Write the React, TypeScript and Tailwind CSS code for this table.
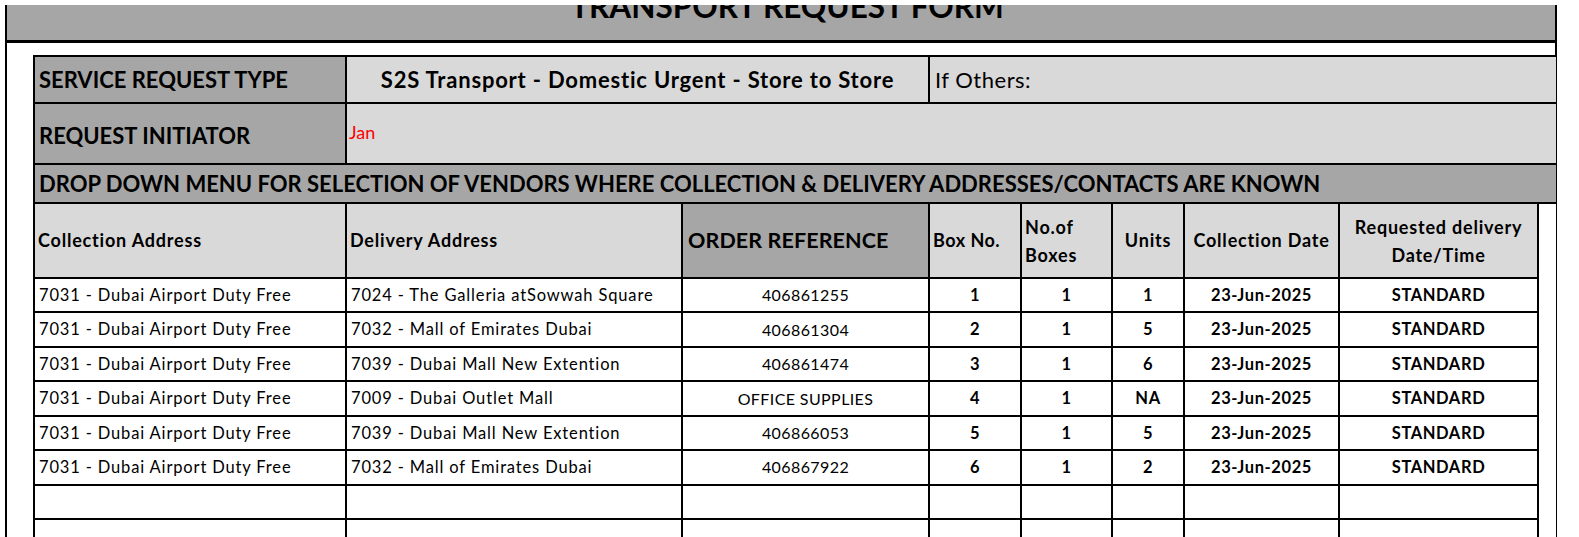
import React from 'react';

type Row = {
    from: string;
    to: string;
    ref: string;
    box: string;
    boxes: string;
    units: string;
    date: string;
    delivery: string;
};

const rows: Row[] = [
    { from: '7031 - Dubai Airport Duty Free', to: '7024 - The Galleria atSowwah Square', ref: '406861255', box: '1', boxes: '1', units: '1', date: '23-Jun-2025', delivery: 'STANDARD' },
    { from: '7031 - Dubai Airport Duty Free', to: '7032 - Mall of Emirates Dubai', ref: '406861304', box: '2', boxes: '1', units: '5', date: '23-Jun-2025', delivery: 'STANDARD' },
    { from: '7031 - Dubai Airport Duty Free', to: '7039 - Dubai Mall New Extention', ref: '406861474', box: '3', boxes: '1', units: '6', date: '23-Jun-2025', delivery: 'STANDARD' },
    { from: '7031 - Dubai Airport Duty Free', to: '7009 - Dubai Outlet Mall', ref: 'OFFICE SUPPLIES', box: '4', boxes: '1', units: 'NA', date: '23-Jun-2025', delivery: 'STANDARD' },
    { from: '7031 - Dubai Airport Duty Free', to: '7039 - Dubai Mall New Extention', ref: '406866053', box: '5', boxes: '1', units: '5', date: '23-Jun-2025', delivery: 'STANDARD' },
    { from: '7031 - Dubai Airport Duty Free', to: '7032 - Mall of Emirates Dubai', ref: '406867922', box: '6', boxes: '1', units: '2', date: '23-Jun-2025', delivery: 'STANDARD' },
];

// Shared cell border, like an Excel grid line
const cell = 'border-2 border-black p-0';

// Trailing blank column: only the left line shows
const spacer = 'border-2 border-y-0 border-r-0 border-black bg-white p-0';

// Data cell text styles
const addr = 'pl-[4px] text-left text-[16.5px] tracking-[0.85px]';
const plain = 'text-center text-[16px] tracking-[0.4px]';
const bold = 'text-center text-[16.5px] tracking-[0.6px] font-bold';

const DataRow: React.FC<{ row?: Row }> = ({ row }) => (
    <tr className="h-[34.45px]">
        <td className={`${cell} ${addr}`}>{row?.from}</td>
        <td className={`${cell} ${addr}`}>{row?.to}</td>
        <td className={`${cell} ${plain}`}>{row?.ref}</td>
        <td className={`${cell} ${bold}`}>{row?.box}</td>
        <td className={`${cell} ${bold}`}>{row?.boxes}</td>
        <td className={`${cell} ${bold}`}>{row?.units}</td>
        <td className={`${cell} ${bold}`}>{row?.date}</td>
        <td className={`${cell} ${bold}`}>{row?.delivery}</td>
        <td className={spacer} />
    </tr>
);

export default function App() {
    return (
        <div className="h-[537px] w-[1579px] overflow-hidden bg-white pt-[5px] pl-[5px] font-['Lato',sans-serif] text-black">
            <div className="h-[600px] w-[1552px] border-x-2 border-black">
                {/* Title band, clipped at the top like the sheet */}
                <div className="h-[38px] overflow-hidden border-b-[3px] border-black bg-[#a6a6a6]">
                    <div className="-mt-[18px] pl-[12px] text-center text-[31.5px] leading-[38px] font-bold">
                        TRANSPORT REQUEST FORM
                    </div>
                </div>

                <div className="pt-[12px] pl-[26px]">
                    <table className="w-[1522px] table-fixed border-collapse">
                        <colgroup>
                            <col className="w-[312px]" />
                            <col className="w-[336px]" />
                            <col className="w-[247px]" />
                            <col className="w-[92px]" />
                            <col className="w-[91px]" />
                            <col className="w-[72px]" />
                            <col className="w-[155px]" />
                            <col className="w-[199px]" />
                            <col className="w-[18px]" />
                        </colgroup>
                        <tbody>
                            <tr className="h-[47px] text-[22px]">
                                <td className={`${cell} bg-[#a6a6a6] pl-[4px] font-bold`}>SERVICE REQUEST TYPE</td>
                                <td colSpan={2} className={`${cell} bg-[#d9d9d9] text-center font-bold tracking-[0.8px]`}>
                                    S2S Transport - Domestic Urgent - Store to Store
                                </td>
                                <td colSpan={6} className={`${cell} border-r-0 bg-[#d9d9d9] pl-[5px] tracking-[0.5px]`}>
                                    If Others:
                                </td>
                            </tr>
                            <tr className="h-[61px]">
                                <td className={`${cell} bg-[#a6a6a6] pl-[4px] pt-[4px] text-[22px] font-bold`}>REQUEST INITIATOR</td>
                                <td colSpan={8} className={`${cell} border-r-0 bg-[#d9d9d9] pl-[2px] pb-[2px] text-[18px] text-[#ff0000]`}>
                                    Jan
                                </td>
                            </tr>
                            <tr className="h-[39px]">
                                <td colSpan={9} className={`${cell} border-r-0 bg-[#a6a6a6] pl-[4px] text-[22px] font-bold`}>
                                    DROP DOWN MENU FOR SELECTION OF VENDORS WHERE COLLECTION &amp; DELIVERY ADDRESSES/CONTACTS ARE KNOWN
                                </td>
                            </tr>
                            <tr className="h-[75px] text-[18px] font-bold tracking-[0.8px]">
                                <td className={`${cell} bg-[#d9d9d9] pl-[3px]`}>Collection Address</td>
                                <td className={`${cell} bg-[#d9d9d9] pl-[3px]`}>Delivery Address</td>
                                <td className={`${cell} bg-[#a6a6a6] pl-[5px] text-[21.5px] tracking-[0.1px]`}>ORDER REFERENCE</td>
                                <td className={`${cell} bg-[#d9d9d9] pl-[3px] tracking-[0.5px]`}>Box No.</td>
                                <td className={`${cell} bg-[#d9d9d9] pl-[3px] leading-[28px]`}>
                                    No.of
                                    <br />
                                    Boxes
                                </td>
                                <td className={`${cell} bg-[#d9d9d9] text-center`}>Units</td>
                                <td className={`${cell} bg-[#d9d9d9] text-center`}>Collection Date</td>
                                <td className={`${cell} bg-[#d9d9d9] text-center leading-[28px]`}>
                                    Requested delivery
                                    <br />
                                    Date/Time
                                </td>
                                <td className={spacer} />
                            </tr>
                            {rows.map((row, idx) => (
                                <DataRow key={idx} row={row} />
                            ))}
                            <DataRow />
                            <DataRow />
                        </tbody>
                    </table>
                </div>
            </div>
        </div>
    );
}
